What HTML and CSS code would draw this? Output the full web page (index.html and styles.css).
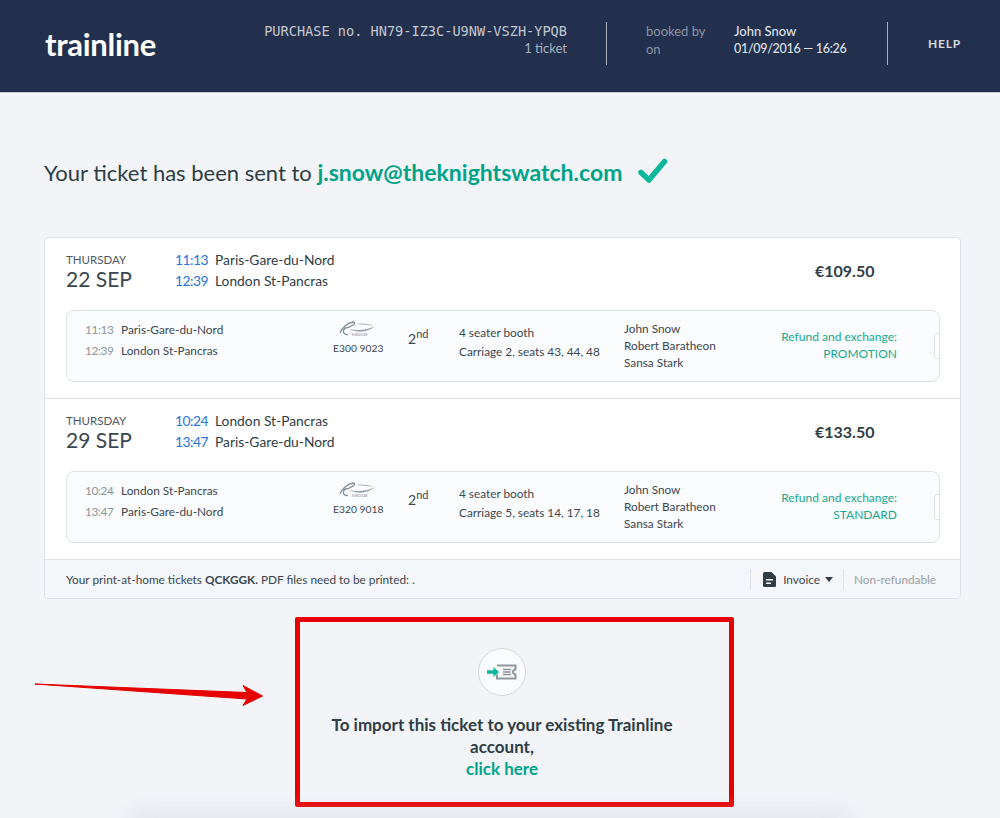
FILE: index.html
```html
<!DOCTYPE html>
<html lang="en">
<head>
    <meta charset="UTF-8">
    <title>Trainline - Your ticket</title>
    <link rel="stylesheet" href="styles.css">
</head>
<body>
    <header class="topbar">
        <a class="logo" href="#">trainline</a>
        <div class="purchase">
            <div class="purchase-no">PURCHASE no. HN79-IZ3C-U9NW-VSZH-YPQB</div>
            <div class="purchase-count">1 ticket</div>
        </div>
        <div class="booked">
            <div class="booked-labels">
                <div>booked by</div>
                <div>on</div>
            </div>
            <div class="booked-values">
                <div>John Snow</div>
                <div class="booked-date">01/09/2016 — 16:26</div>
            </div>
        </div>
        <a class="help" href="#">HELP</a>
    </header>

    <main class="content">
        <h1 class="sent-title">
            Your ticket has been sent to <span class="sent-email">j.snow@theknightswatch.com</span>
            <svg class="sent-check" width="30" height="26" viewBox="0 0 30 26"><path d="M3 14.500l8 7.500L26.500 3.500" fill="none" stroke="#0cb89b" stroke-width="5.500" stroke-linejoin="round" stroke-linecap="round"/></svg>
        </h1>

        <section class="card">
            <!-- Outward -->
            <div class="segment">
                <div class="segment-head">
                    <div class="date">
                        <div class="date-day">THURSDAY</div>
                        <div class="date-num">22 SEP</div>
                    </div>
                    <div class="stops">
                        <div><span class="stop-time">11:13</span>Paris-Gare-du-Nord</div>
                        <div><span class="stop-time">12:39</span>London St-Pancras</div>
                    </div>
                    <div class="price">€109.50</div>
                </div>
                <div class="leg">
                    <div class="leg-route">
                        <div><span class="leg-time">11:13</span>Paris-Gare-du-Nord</div>
                        <div><span class="leg-time">12:39</span>London St-Pancras</div>
                    </div>
                    <div class="leg-train">
                        <svg class="train-logo" width="38" height="18" viewBox="0 0 38 18">
                            <path d="M2 13C4 8 9 3 15 2C17 2 17 4 15 5C12 7 9 8 7 8" fill="none" stroke="#7f8a92" stroke-width="1.300"/>
                            <path d="M7 8C4 11 5 15 10 14.500" fill="none" stroke="#7f8a92" stroke-width="1.300"/>
                            <path d="M11 9C19 11 30 10 37 6C30 13 19 13 11 9Z" fill="#9aa3aa"/>
                            <path d="M18 4C24 3 31 4 36 5.500C30 5 24 5 18 4Z" fill="#b5bcc2"/>
                            <text x="14" y="16" class="train-logo-text">EUROSTAR</text>
                        </svg>
                        <div>E300 9023</div>
                    </div>
                    <div class="leg-class">2<sup>nd</sup></div>
                    <div class="leg-seat">
                        <div>4 seater booth</div>
                        <div>Carriage 2, seats 43, 44, 48</div>
                    </div>
                    <div class="leg-people">
                        <div>John Snow</div>
                        <div>Robert Baratheon</div>
                        <div>Sansa Stark</div>
                    </div>
                    <div class="leg-refund">
                        <div>Refund and exchange:</div>
                        <div>PROMOTION</div>
                    </div>
                    <div class="leg-stub"></div>
                </div>
            </div>

            <!-- Return -->
            <div class="segment">
                <div class="segment-head">
                    <div class="date">
                        <div class="date-day">THURSDAY</div>
                        <div class="date-num">29 SEP</div>
                    </div>
                    <div class="stops">
                        <div><span class="stop-time">10:24</span>London St-Pancras</div>
                        <div><span class="stop-time">13:47</span>Paris-Gare-du-Nord</div>
                    </div>
                    <div class="price">€133.50</div>
                </div>
                <div class="leg">
                    <div class="leg-route">
                        <div><span class="leg-time">10:24</span>London St-Pancras</div>
                        <div><span class="leg-time">13:47</span>Paris-Gare-du-Nord</div>
                    </div>
                    <div class="leg-train">
                        <svg class="train-logo" width="38" height="18" viewBox="0 0 38 18">
                            <path d="M2 13C4 8 9 3 15 2C17 2 17 4 15 5C12 7 9 8 7 8" fill="none" stroke="#7f8a92" stroke-width="1.300"/>
                            <path d="M7 8C4 11 5 15 10 14.500" fill="none" stroke="#7f8a92" stroke-width="1.300"/>
                            <path d="M11 9C19 11 30 10 37 6C30 13 19 13 11 9Z" fill="#9aa3aa"/>
                            <path d="M18 4C24 3 31 4 36 5.500C30 5 24 5 18 4Z" fill="#b5bcc2"/>
                            <text x="14" y="16" class="train-logo-text">EUROSTAR</text>
                        </svg>
                        <div>E320 9018</div>
                    </div>
                    <div class="leg-class">2<sup>nd</sup></div>
                    <div class="leg-seat">
                        <div>4 seater booth</div>
                        <div>Carriage 5, seats 14, 17, 18</div>
                    </div>
                    <div class="leg-people">
                        <div>John Snow</div>
                        <div>Robert Baratheon</div>
                        <div>Sansa Stark</div>
                    </div>
                    <div class="leg-refund">
                        <div>Refund and exchange:</div>
                        <div>STANDARD</div>
                    </div>
                    <div class="leg-stub"></div>
                </div>
            </div>

            <div class="card-foot">
                <div class="foot-text">Your print-at-home tickets <b>QCKGGK.</b> PDF files need to be printed: .</div>
                <div class="foot-invoice">
                    <svg width="13" height="15" viewBox="0 0 13 15"><path d="M1.500 0H8.500L13 4.500V13.500A1.500 1.500 0 0 1 11.500 15H1.500A1.500 1.500 0 0 1 0 13.500V1.500A1.500 1.500 0 0 1 1.500 0ZM3 7V8.500H10V7ZM3 10.500V12H8V10.500Z" fill="#2f3d45" fill-rule="evenodd"/></svg>
                    <span>Invoice</span>
                    <span class="caret"></span>
                </div>
                <div class="foot-refund">Non-refundable</div>
            </div>
        </section>

        <section class="import-box">
            <div class="import-icon">
                <svg width="30" height="16" viewBox="0 0 30 16">
                    <path d="M10 1.500H28.500V5.500A2.500 2.500 0 0 0 28.500 10.500V14.500H10V10.500" fill="none" stroke="#8f979c" stroke-width="2"/>
                    <path d="M16 5.500H24M16 8H24M16 10.500H24" stroke="#8f979c" stroke-width="1.400"/>
                    <path d="M0 6.200H6.500V3L12 8L6.500 13V9.800H0Z" fill="#0cb89b"/>
                </svg>
            </div>
            <div class="import-text">To import this ticket to your existing Trainline account,</div>
            <a class="import-link" href="#">click here</a>
        </section>

        <svg class="annot-arrow" width="232" height="28" viewBox="0 0 232 28">
            <path d="M0 2L212 10.500L208 3.500L227.500 14L208 23.500L212 17Z" fill="#e60000" stroke="#e60000" stroke-linejoin="round"/>
        </svg>
        <div class="page-shadow"></div>
    </main>
</body>
</html>
```

FILE: styles.css
```css
* {
    margin: 0;
    padding: 0;
    box-sizing: border-box;
}

html, body {
    height: 818px;
    overflow: hidden;
}

body {
    font-family: 'Lato', sans-serif;
    background: #f2f4f8;
    color: #2f3d45;
}

a {
    text-decoration: none;
}

/* Top bar */
.topbar {
    display: flex;
    align-items: flex-start;
    height: 93px;
    padding: 22px 0 0 45px;
    background: #22304e;
    border-bottom: 1px solid #c9ccd2;
    color: #fff;
}

.logo {
    width: 151px;
    margin-top: 4px;
    color: #fff;
    font-size: 31px;
    font-weight: 700;
    line-height: 36px;
    letter-spacing: -0.3px;
}

.purchase {
    width: 411px;
    height: 43px;
    padding-right: 39px;
    border-right: 1px solid #a9afba;
    text-align: right;
    color: #c3c7cf;
}

.purchase-no {
    font-family: 'DejaVu Sans Mono', monospace;
    font-size: 13.6px;
    line-height: 18px;
}

.purchase-count {
    font-size: 13px;
    line-height: 17px;
    color: #a9afba;
}

.booked {
    display: flex;
    width: 281px;
    height: 43px;
    padding-left: 39px;
    border-right: 1px solid #a9afba;
    font-size: 13px;
    line-height: 18px;
}

.booked-labels {
    width: 88px;
    color: #8b93a3;
}

.booked-values {
    color: #dfe1e6;
    font-weight: 500;
}

.booked-date {
    font-size: 12.500px;
    letter-spacing: -0.3px;
}

.help {
    margin-left: 40px;
    color: #d5d8de;
    font-size: 12px;
    font-weight: 700;
    line-height: 43px;
    letter-spacing: 0.8px;
}

/* Content */
.content {
    position: relative;
    padding: 0 39px 0 44px;
    height: 725px;
}

.sent-title {
    height: 144px;
    padding-top: 65px;
    font-size: 22px;
    font-weight: 400;
    line-height: 28px;
}

.sent-email {
    color: #00a388;
    font-size: 23px;
    font-weight: 700;
}

.sent-check {
    margin-left: 10px;
    vertical-align: -3px;
}

.card {
    border: 1px solid #dde2e9;
    border-radius: 4px;
    background: #fff;
}

.segment {
    height: 161px;
    padding: 0 20px 0 21px;
    border-bottom: 1px solid #dde2e9;
}

.segment-head {
    display: flex;
    height: 72px;
    padding-top: 15px;
}

.date {
    width: 109px;
}

.date-day {
    font-size: 11.500px;
    line-height: 14px;
    color: #4d5960;
}

.date-num {
    margin-top: -1px;
    font-size: 21px;
    line-height: 25px;
    color: #3a474f;
}

.stops {
    width: 640px;
    margin-top: -4px;
    font-size: 13.800px;
    line-height: 21px;
}

.stop-time {
    display: inline-block;
    width: 40px;
    color: #2a73d9;
    letter-spacing: -0.5px;
}

.price {
    margin-top: 8px;
    font-size: 16px;
    font-weight: 700;
}

.leg {
    display: flex;
    height: 72px;
    padding-left: 18px;
    overflow: hidden;
    border: 1px solid #dde2e9;
    border-radius: 8px;
    background: #fbfcfd;
    font-size: 11.800px;
    color: #3a474f;
}

.leg > div {
    flex-shrink: 0;
}

.leg-route {
    width: 248px;
    padding-top: 8px;
    line-height: 21px;
}

.leg-time {
    display: inline-block;
    width: 36px;
    color: #8b959c;
    letter-spacing: -0.4px;
}

.leg-train {
    width: 75px;
    font-size: 10.300px;
    line-height: 14px;
}

.train-logo {
    display: block;
    margin: 9px 0 3px 5px;
}

.train-logo-text {
    font-size: 3px;
    fill: #7f8a92;
}

.leg-class {
    width: 51px;
    padding-top: 18px;
    font-size: 14px;
    line-height: 20px;
}

.leg-class sup {
    font-size: 11px;
    line-height: 0;
}

.leg-seat {
    width: 165px;
    padding-top: 12px;
    line-height: 19px;
}

.leg-people {
    width: 125px;
    padding-top: 9px;
    line-height: 17px;
}

.leg-refund {
    width: 148px;
    padding-top: 17px;
    font-size: 12px;
    line-height: 17px;
    text-align: right;
    color: #17a88f;
}

.leg-stub {
    width: 8px;
    height: 26px;
    margin: 22px 0 0 37px;
    border: 1px solid #dde2e9;
    border-radius: 3px 0 0 3px;
    background: #fff;
}

.card-foot {
    display: flex;
    align-items: center;
    height: 38px;
    padding: 0 21px;
    background: #f4f6f9;
    border-radius: 0 0 4px 4px;
    font-size: 11.800px;
    color: #3a474f;
}

.foot-text {
    flex: 1;
}

.foot-invoice {
    display: flex;
    align-items: center;
    gap: 7px;
    height: 21px;
    padding: 0 10px 0 12px;
    border-left: 1px solid #dde2e9;
    border-right: 1px solid #dde2e9;
}

.caret {
    margin-left: -2px;
    border: 4px solid transparent;
    border-top: 5px solid #2f3d45;
    border-bottom: 0;
}

.foot-refund {
    width: 95px;
    padding-left: 10px;
    color: #98a1a7;
}

/* Import box */
.import-box {
    display: flex;
    flex-direction: column;
    align-items: center;
    width: 439px;
    height: 190px;
    margin: 18px 0 0 251px;
    padding: 26px 25px 0 0;
    border: 5px solid #e60000;
    border-radius: 2px;
}

.import-icon {
    display: flex;
    align-items: center;
    justify-content: center;
    width: 48px;
    height: 48px;
    border: 1px solid #d5d8dc;
    border-radius: 50%;
    background: #fafbfc;
}

.import-text {
    width: 360px;
    margin-top: 18px;
    font-size: 17px;
    font-weight: 700;
    line-height: 22px;
    text-align: center;
}

.import-link {
    color: #00a388;
    font-size: 17px;
    font-weight: 700;
    line-height: 22px;
}

/* Annotation on top of the page */
.annot-arrow {
    position: absolute;
    left: 35px;
    top: 589px;
}

.page-shadow {
    position: absolute;
    left: 130px;
    right: 150px;
    bottom: -14px;
    height: 16px;
    background: #c9ccd2;
    filter: blur(12px);
    opacity: 0.6;
}
```
